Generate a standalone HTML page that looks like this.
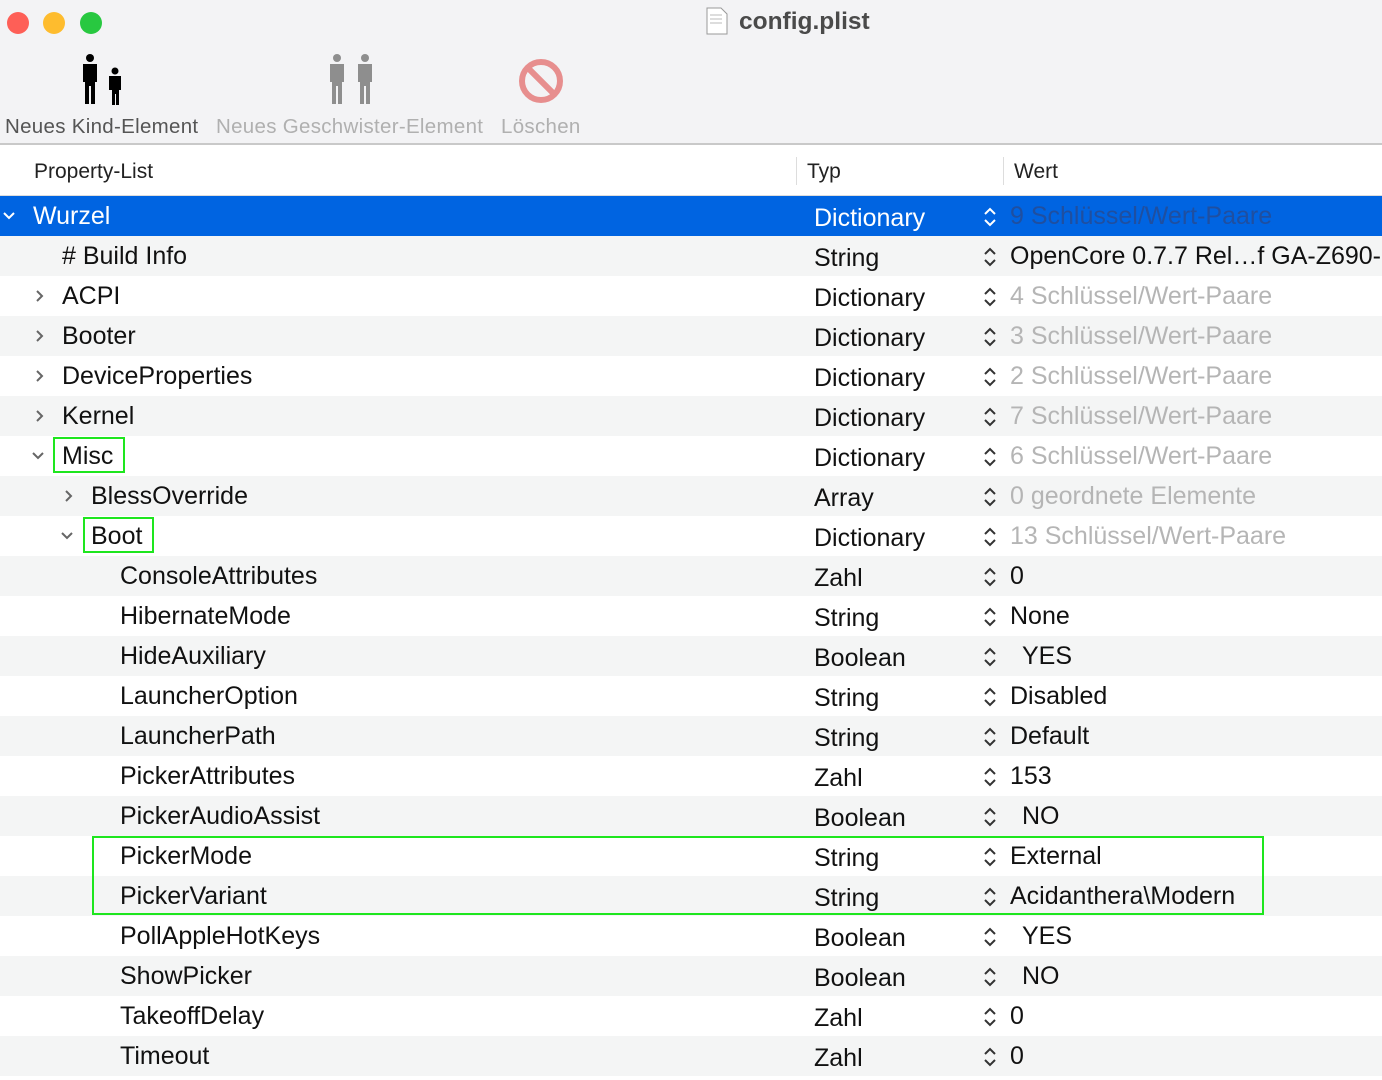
<!DOCTYPE html><html><head><meta charset="utf-8"><style>
*{margin:0;padding:0;box-sizing:border-box}
body{width:1382px;height:1080px;overflow:hidden;background:#fff;font-family:"Liberation Sans",sans-serif;position:relative}
.tb{position:absolute;left:0;top:0;width:1382px;height:145px;background:#f3f3f5;border-bottom:2px solid #c9c9c9}
.dot{position:absolute;top:12px;width:22px;height:22px;border-radius:50%}
.title{position:absolute;left:739px;top:8px;font-size:24.5px;font-weight:bold;color:#4a4a4a}
.lbl{position:absolute;top:115px;font-size:20.5px;color:#707070;letter-spacing:.3px}
.hdr{position:absolute;top:147px;left:0;width:1382px;height:49px;background:#fff;border-bottom:1px solid #ddd;font-size:21px;color:#222}
.hdr span{position:absolute;top:13px}
.sep{position:absolute;top:10px;width:1px;height:28px;background:#ddd}
.row{position:absolute;left:0;width:1382px;height:40px;font-size:25px;color:#111}
.row.g{background:#f4f5f5}
.row.sel{background:#0064e1;color:#fff}
.row span{position:absolute;top:6px;white-space:nowrap}
.t{left:814px;top:8px!important}
.v{left:1010px}
.dim{color:#b5b5b5}
.sel .dim{color:#1f4fa0}
.ud{position:absolute;left:983px;top:10px;width:14px;height:22px}
.ar{position:absolute;top:12px;width:14px;height:16px}
.gb{position:absolute;border:2.5px solid #1ee61e}
</style></head><body>
<div class="tb">
<div class="dot" style="left:7px;background:#fe5f57"></div>
<div class="dot" style="left:43px;background:#febc2e"></div>
<div class="dot" style="left:80px;background:#28c840"></div>
<svg style="position:absolute;left:706px;top:7px" width="22" height="28"><path d="M1 1h14l6 6v20H1z" fill="#fff" stroke="#999"/><path d="M4 8h12M4 12h12M4 16h12" stroke="#bbb"/></svg>
<div class="title">config.plist</div>
<svg style="position:absolute;left:78px;top:52px" width="48" height="54" fill="#000"><circle cx="12" cy="6" r="4"/><path d="M5 12h14v18h-2v22h-4V34h-2v18H7V30H5z"/><circle cx="37" cy="19" r="3.5"/><path d="M31 24h12v14h-2v15h-3V42h-1v11h-3V38h-3z"/></svg>
<svg style="position:absolute;left:325px;top:52px" width="52" height="54" fill="#8e8e8e"><circle cx="12" cy="6" r="4"/><path d="M5 12h14v18h-2v22h-4V34h-2v18H7V30H5z"/><circle cx="40" cy="6" r="4"/><path d="M33 12h14v18h-2v22h-4V34h-2v18h-4V30h-2z"/></svg>
<svg style="position:absolute;left:518px;top:58px" width="46" height="46"><circle cx="23" cy="23" r="19" fill="none" stroke="#e78e8e" stroke-width="6"/><path d="M10 10L36 36" stroke="#e78e8e" stroke-width="6"/></svg>
<div class="lbl" style="left:5px;color:#555">Neues Kind-Element</div>
<div class="lbl" style="left:216px;color:#b0b0b0">Neues Geschwister-Element</div>
<div class="lbl" style="left:501px;color:#b0b0b0">Löschen</div>
</div>
<div class="hdr"><span style="left:34px">Property-List</span><div class="sep" style="left:796px"></div><span style="left:807px">Typ</span><div class="sep" style="left:1003px"></div><span style="left:1014px">Wert</span></div>
<div id="rows"></div>
<div class="gb" style="left:53px;top:437px;width:72px;height:36px"></div>
<div class="gb" style="left:83px;top:517px;width:71px;height:36px"></div>
<div class="gb" style="left:92px;top:836px;width:1172px;height:79px"></div>
<script>
var R=[[0,'Wurzel','d','Dictionary','9 Schlüssel/Wert-Paare',1],
[1,'# Build Info','','String','OpenCore 0.7.7 Rel…f GA-Z690-',0],
[1,'ACPI','r','Dictionary','4 Schlüssel/Wert-Paare',1],
[1,'Booter','r','Dictionary','3 Schlüssel/Wert-Paare',1],
[1,'DeviceProperties','r','Dictionary','2 Schlüssel/Wert-Paare',1],
[1,'Kernel','r','Dictionary','7 Schlüssel/Wert-Paare',1],
[1,'Misc','d','Dictionary','6 Schlüssel/Wert-Paare',1],
[2,'BlessOverride','r','Array','0 geordnete Elemente',1],
[2,'Boot','d','Dictionary','13 Schlüssel/Wert-Paare',1],
[3,'ConsoleAttributes','','Zahl','0',0],
[3,'HibernateMode','','String','None',0],
[3,'HideAuxiliary','','Boolean',' YES',0],
[3,'LauncherOption','','String','Disabled',0],
[3,'LauncherPath','','String','Default',0],
[3,'PickerAttributes','','Zahl','153',0],
[3,'PickerAudioAssist','','Boolean',' NO',0],
[3,'PickerMode','','String','External',0],
[3,'PickerVariant','','String','Acidanthera\\Modern',0],
[3,'PollAppleHotKeys','','Boolean',' YES',0],
[3,'ShowPicker','','Boolean',' NO',0],
[3,'TakeoffDelay','','Zahl','0',0],
[3,'Timeout','','Zahl','0',0]];
var h='';R.forEach(function(r,i){var c=i==0?'row sel':(i%2?'row g':'row');var tx=[33,62,91,120][r[0]];var ax=tx-31;var sc=i==0?'#fff':'#666';
var a='';if(r[2]=='d')a='<svg class="ar" style="left:'+ax+'px" viewBox="0 0 14 16"><path d="M2 5l5 5 5-5" fill="none" stroke="'+sc+'" stroke-width="2"/></svg>';
if(r[2]=='r')a='<svg class="ar" style="left:'+(ax+2)+'px" viewBox="0 0 14 16"><path d="M4 3l5 5-5 5" fill="none" stroke="'+sc+'" stroke-width="2"/></svg>';
var v=r[4].charAt(0)==' '?'<span class="v" style="left:1022px">'+r[4].trim()+'</span>':'<span class="v'+(r[5]?' dim':'')+'">'+r[4]+'</span>';
h+='<div class="'+c+'" style="top:'+(196+i*40)+'px">'+a+'<span style="left:'+tx+'px">'+r[1]+'</span><span class="t">'+r[3]+'</span><svg class="ud" viewBox="0 0 14 22"><path d="M2 8l5-5 5 5M2 14l5 5 5-5" fill="none" stroke="'+(i==0?'#fff':'#333')+'" stroke-width="2"/></svg>'+v+'</div>';});
document.getElementById('rows').innerHTML=h;
</script>
</body></html>
